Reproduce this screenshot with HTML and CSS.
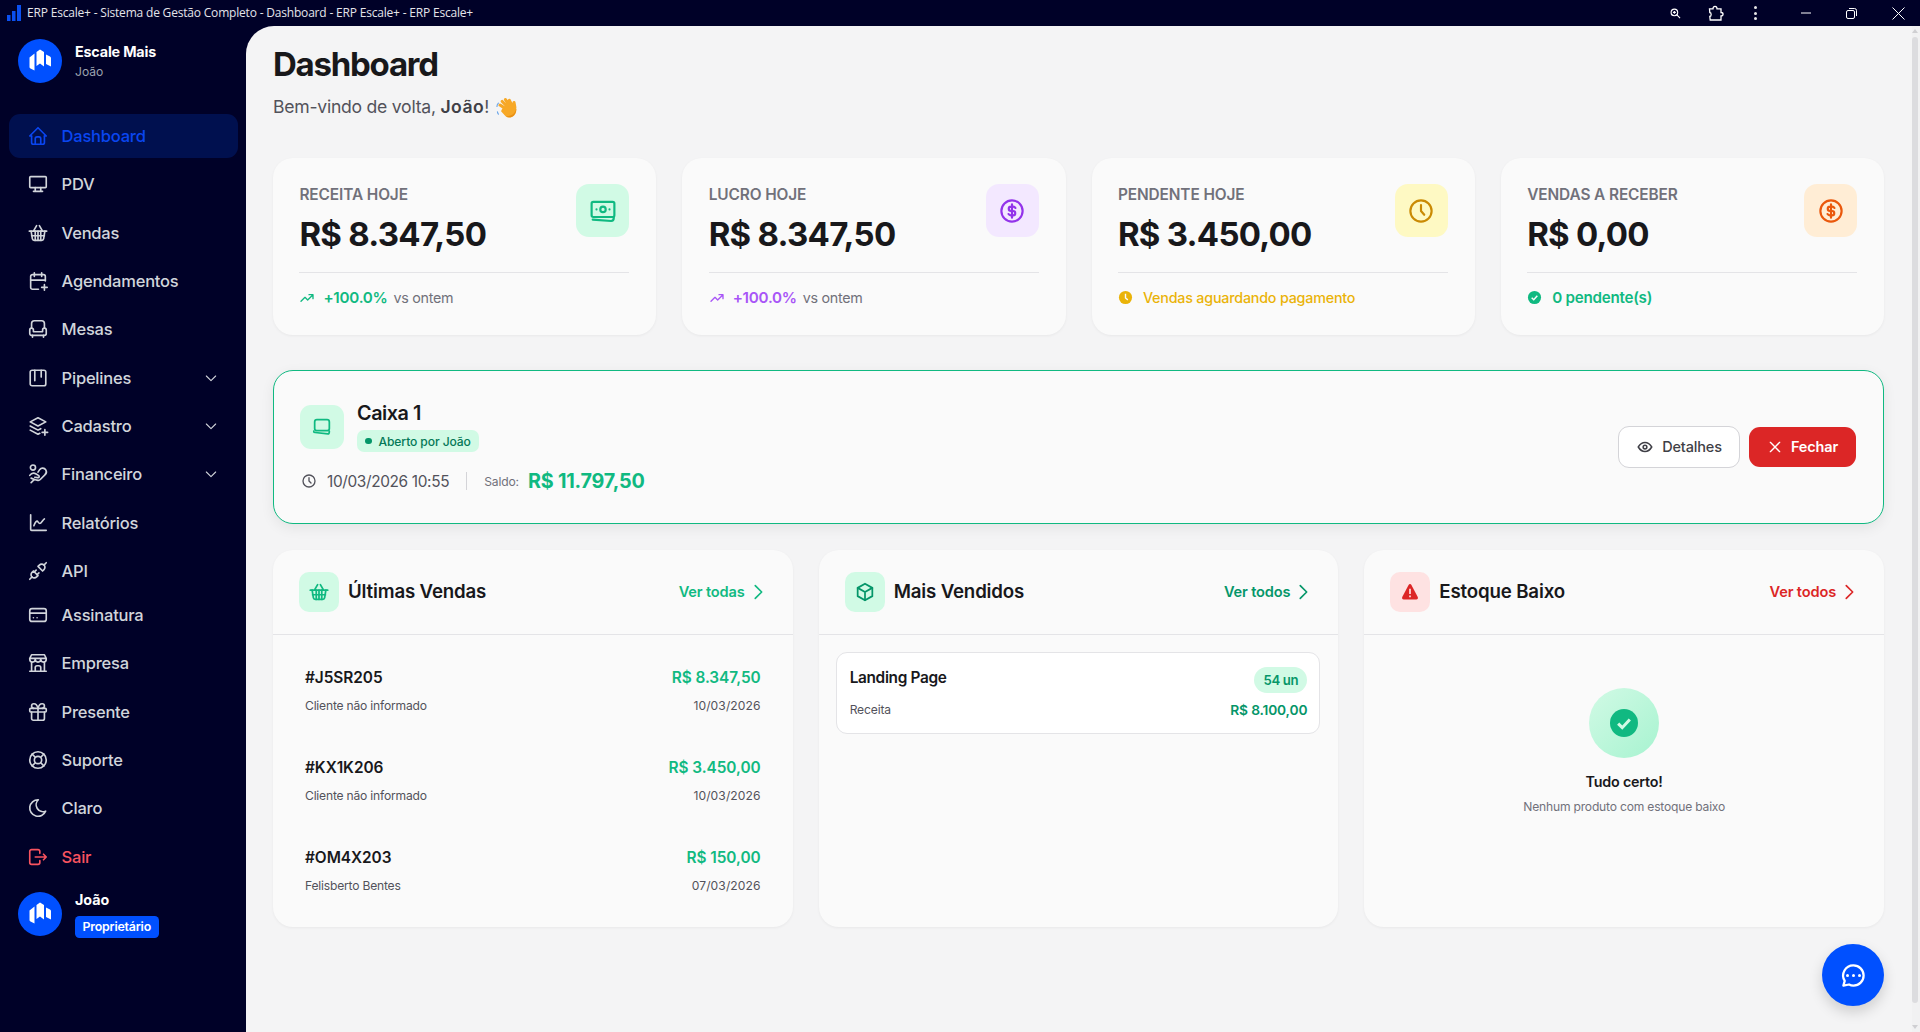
FILE: index.html
```html
<!DOCTYPE html>
<html lang="pt-BR">
<head>
<meta charset="utf-8">
<title>ERP Escale+</title>
<link rel="stylesheet" href="styles.css">
</head>
<body>
<svg class="defs" width="0" height="0" aria-hidden="true">
  <symbol id="i-logo" viewBox="0 0 44 44"><path fill="#fff" stroke="none" d="M11.5 18.5 16.5 14.5V31.5L12.5 29.5Q11.5 29 11.5 28ZM18.5 13 22 10.5 26 13V27.5L22 24.5 18.5 27ZM28 15.5 32 17.5Q33 18 33 19V27.5L28 25Z"/></symbol>
  <symbol id="i-home" viewBox="0 0 24 24"><path d="M5 12H3l9-9 9 9h-2"/><path d="M5 12v7a2 2 0 0 0 2 2h10a2 2 0 0 0 2-2v-7"/><path d="M9 21v-6a2 2 0 0 1 2-2h2a2 2 0 0 1 2 2v6"/></symbol>
  <symbol id="i-desktop" viewBox="0 0 24 24"><path d="M3 5a1 1 0 0 1 1-1h16a1 1 0 0 1 1 1v10a1 1 0 0 1-1 1H4a1 1 0 0 1-1-1z"/><path d="M7 20h10M9 16v4M15 16v4"/></symbol>
  <symbol id="i-basket" viewBox="0 0 24 24"><path d="M7 10l3.5-6M17 10l-3.5-6M2.5 10h19"/><path d="M4.5 10l1.4 8.4A2 2 0 0 0 7.9 20h8.2a2 2 0 0 0 2-1.6L19.500 10"/><path d="M5 15h14M9 10v10M12 10v10M15 10v10"/></symbol>
  <symbol id="i-calendar" viewBox="0 0 24 24"><path d="M12.500 21H6a2 2 0 0 1-2-2V7a2 2 0 0 1 2-2h12a2 2 0 0 1 2 2v5"/><path d="M16 3v4M8 3v4M4 11h16M16 19h6M19 16v6"/></symbol>
  <symbol id="i-sofa" viewBox="0 0 24 24"><path d="M5 11a2 2 0 0 1 2 2v2h10v-2a2 2 0 1 1 4 0v4a2 2 0 0 1-2 2H5a2 2 0 0 1-2-2v-4a2 2 0 0 1 2-2z"/><path d="M5 11V6a3 3 0 0 1 3-3h8a3 3 0 0 1 3 3v5M6 19v2M18 19v2"/></symbol>
  <symbol id="i-trello" viewBox="0 0 24 24"><rect x="3.500" y="3.500" width="17" height="17" rx="2"/><path d="M8.500 3.500V15M15.500 3.500V11"/></symbol>
  <symbol id="i-stack" viewBox="0 0 24 24"><path d="M12 3 3.500 7.500 12 12l8.500-4.500z"/><path d="M3.500 12 12 16.500l3-1.600M3.500 16.500 12 21l2-1M16.500 19h6M19.500 16v6"/></symbol>
  <symbol id="i-hand" viewBox="0 0 24 24"><circle cx="6.500" cy="5" r="2.800"/><path d="M3 13.500c2-2.800 4.500-3 7-1.500l2.500 1.500c1.500.8.8 2.800-1 2.500l-3-.5"/><path d="M12 10l2-3c1.500-2 5-1.800 6.500.5 1.200 2 .7 4-1 5.500l-5 5a3 3 0 0 1-2.500.9L8 18l-3.500 3.500"/><path d="M4.500 16.500 8 18"/></symbol>
  <symbol id="i-chart" viewBox="0 0 24 24"><path d="M4 3v16a1 1 0 0 0 1 1h16"/><path d="M7.500 15c1.200-3 2.500-5 3.500-5s1.500 2.500 3 2.500 3-3.500 5-5"/></symbol>
  <symbol id="i-plug" viewBox="0 0 24 24"><path d="M7 12l5 5-1.500 1.500a3.536 3.536 0 1 1-5-5z"/><path d="M17 12l-5-5 1.500-1.500a3.536 3.536 0 1 1 5 5z"/><path d="M3 21l2.500-2.500M18.500 5.500 21 3M10 11l-2 2M13 14l-2 2"/></symbol>
  <symbol id="i-card" viewBox="0 0 24 24"><rect x="3" y="5" width="18" height="14" rx="2.500"/><path d="M3 10h18M7 15h.01M11 15h.01"/></symbol>
  <symbol id="i-store" viewBox="0 0 24 24"><path d="M3 21h18M3 7v1a3 3 0 0 0 6 0V7m0 1a3 3 0 0 0 6 0V7m0 1a3 3 0 0 0 6 0V7H3l2-4h14l2 4"/><path d="M5 21V10.850M19 21V10.850M9 21v-4a2 2 0 0 1 2-2h2a2 2 0 0 1 2 2v4"/></symbol>
  <symbol id="i-gift" viewBox="0 0 24 24"><rect x="3" y="8" width="18" height="4" rx="1"/><path d="M12 8v13M19 12v7a2 2 0 0 1-2 2H7a2 2 0 0 1-2-2v-7"/><path d="M7.500 8a2.500 2.500 0 0 1 0-5A4.800 8 0 0 1 12 8a4.800 8 0 0 1 4.500-5 2.500 2.500 0 0 1 0 5"/></symbol>
  <symbol id="i-buoy" viewBox="0 0 24 24"><circle cx="12" cy="12" r="4"/><circle cx="12" cy="12" r="9"/><path d="M15 15l3.350 3.350M9 15l-3.350 3.350M5.650 5.650 9 9M18.350 5.650 15 9"/></symbol>
  <symbol id="i-moon" viewBox="0 0 24 24"><path d="M12 3h.393a7.500 7.500 0 0 0 7.920 12.446A9 9 0 1 1 12 3z"/></symbol>
  <symbol id="i-logout" viewBox="0 0 24 24"><path d="M14 8V6a2 2 0 0 0-2-2H5a2 2 0 0 0-2 2v12a2 2 0 0 0 2 2h7a2 2 0 0 0 2-2v-2"/><path d="M9 12h12l-3-3M18 15l3-3"/></symbol>
  <symbol id="i-down" viewBox="0 0 24 24"><path d="M5 9l7 7 7-7"/></symbol>
  <symbol id="i-right" viewBox="0 0 24 24"><path d="M9 5l7 7-7 7"/></symbol>
  <symbol id="i-cash" viewBox="0 0 24 24"><rect x="1.500" y="3.500" width="21" height="14" rx="1.500"/><circle cx="12" cy="10.500" r="2.500"/><path d="M6 10.500h.01M18 10.500h.01M2.500 20l17 1.200c1.500 0 2.500-1 2.500-3.200"/></symbol>
  <symbol id="i-dollar" viewBox="0 0 24 24"><circle cx="12" cy="12" r="9.800"/><path d="M15.200 9.200A2.500 2.500 0 0 0 13 8h-2a2 2 0 0 0 0 4h2a2 2 0 0 1 0 4h-2a2.500 2.500 0 0 1-2.200-1.200M12 5.800v12.400"/></symbol>
  <symbol id="i-clock" viewBox="0 0 24 24"><circle cx="12" cy="12" r="9.800"/><path d="M12 6.500V12l3 3.500"/></symbol>
  <symbol id="i-clock-sm" viewBox="0 0 24 24"><circle cx="12" cy="12" r="9"/><path d="M12 7v5l3 3"/></symbol>
  <symbol id="i-trend" viewBox="0 0 24 24"><path d="M3 17l6-6 4 4 8-8M15 7h6v6"/></symbol>
  <symbol id="i-register" viewBox="0 0 24 24"><rect x="4" y="4" width="16" height="12" rx="2.500"/><path d="M3 16.500c0 1 .5 1.500 1.500 1.500l14 1.500c1 0 1.500-.5 1.500-3"/></symbol>
  <symbol id="i-eye" viewBox="0 0 24 24"><circle cx="12" cy="12" r="2.500"/><path d="M21 12c-2.400 4-5.400 6-9 6s-6.600-2-9-6c2.400-4 5.400-6 9-6s6.600 2 9 6z"/></symbol>
  <symbol id="i-x" viewBox="0 0 24 24"><path d="M5 5l14 14M19 5 5 19"/></symbol>
  <symbol id="i-box" viewBox="0 0 24 24"><path d="M12 3l8 4.500v9L12 21l-8-4.500v-9z"/><path d="M12 12l8-4.500M12 12v9M12 12 4 7.500"/></symbol>
  <symbol id="i-chat" viewBox="0 0 24 24"><path d="M12 3a9 9 0 0 1 0 18 9 9 0 0 1-4-1l-5 1 1.200-4.200A9 9 0 0 1 12 3z"/></symbol>
</svg>

<div class="app">
  <header class="titlebar">
    <svg class="tb-logo" viewBox="0 0 14 16"><path fill="#0b50f0" d="M0 10h3.500v6H0zM5 6h3.500v10H5zM10 0h4v16h-4z"/></svg>
    <span class="tb-title">ERP Escale+ - Sistema de Gestão Completo - Dashboard - ERP Escale+ - ERP Escale+</span>
    <div class="tb-actions">
      <svg class="tb-zoom" viewBox="0 0 12 12"><circle cx="4.800" cy="4.800" r="3.600"/><path d="M7.500 7.500 11 11M3.200 4.800h3.200M4.800 3.200v3.200"/></svg>
      <svg class="tb-ext" viewBox="0 0 16 16"><path d="M1.500 3.800H5c0-3.300 4-3.300 4 0h4v3.700c2.700 0 2.700 3.300 0 3.300V15H2.200l-.4-3.500c1.800 0 1.800-4 0-4z"/></svg>
      <span class="tb-kebab"><i></i><i></i><i></i></span>
      <svg class="tb-min" viewBox="0 0 10 10"><path d="M0 5h10"/></svg>
      <svg class="tb-max" viewBox="0 0 11 11"><rect x=".5" y="2.500" width="8" height="8" rx="1.500"/><path d="M3 .5h5.500a2 2 0 0 1 2 2V8"/></svg>
      <svg class="tb-close" viewBox="0 0 13 13"><path d="M.5.5l12 12M12.500.5l-12 12"/></svg>
    </div>
  </header>

  <div class="shell">
    <aside class="sidebar">
      <div class="brand">
        <svg class="avatar"><use href="#i-logo"/></svg>
        <div class="brand-text"><strong>Escale Mais</strong><span>João</span></div>
      </div>
      <nav class="nav">
        <a class="nav-item active"><svg class="ic"><use href="#i-home"/></svg><span>Dashboard</span></a>
        <a class="nav-item"><svg class="ic"><use href="#i-desktop"/></svg><span>PDV</span></a>
        <a class="nav-item"><svg class="ic"><use href="#i-basket"/></svg><span>Vendas</span></a>
        <a class="nav-item"><svg class="ic"><use href="#i-calendar"/></svg><span>Agendamentos</span></a>
        <a class="nav-item"><svg class="ic"><use href="#i-sofa"/></svg><span>Mesas</span></a>
        <a class="nav-item"><svg class="ic"><use href="#i-trello"/></svg><span>Pipelines</span><svg class="caret"><use href="#i-down"/></svg></a>
        <a class="nav-item"><svg class="ic"><use href="#i-stack"/></svg><span>Cadastro</span><svg class="caret"><use href="#i-down"/></svg></a>
        <a class="nav-item"><svg class="ic"><use href="#i-hand"/></svg><span>Financeiro</span><svg class="caret"><use href="#i-down"/></svg></a>
        <a class="nav-item"><svg class="ic"><use href="#i-chart"/></svg><span>Relatórios</span></a>
        <a class="nav-item tight"><svg class="ic"><use href="#i-plug"/></svg><span>API</span></a>
        <a class="nav-item"><svg class="ic"><use href="#i-card"/></svg><span>Assinatura</span></a>
        <a class="nav-item"><svg class="ic"><use href="#i-store"/></svg><span>Empresa</span></a>
        <a class="nav-item"><svg class="ic"><use href="#i-gift"/></svg><span>Presente</span></a>
        <a class="nav-item"><svg class="ic"><use href="#i-buoy"/></svg><span>Suporte</span></a>
        <a class="nav-item"><svg class="ic"><use href="#i-moon"/></svg><span>Claro</span></a>
        <a class="nav-item danger"><svg class="ic"><use href="#i-logout"/></svg><span>Sair</span></a>
      </nav>
      <div class="user">
        <svg class="avatar"><use href="#i-logo"/></svg>
        <div class="user-text"><strong>João</strong><span class="role">Proprietário</span></div>
      </div>
    </aside>

    <main class="main">
      <div class="content">
        <h1 class="page-title">Dashboard</h1>
        <p class="page-sub">Bem-vindo de volta, <b>João</b><span class="bang">! </span><svg class="wave" viewBox="0 0 24 24"><g transform="rotate(-16 12 14)"><g fill="none" stroke="#f7a826" stroke-width="3.200" stroke-linecap="round"><path d="M10.500 13 5.800 7.500M12.500 11 9 4.500M15 10.500 12.800 3.500M17.500 11 16.500 5.500M20 14l.5-5"/></g><path fill="#f7a826" d="M7 11.500h13.500l.5 3c0 5-3.500 8.500-7.500 8.500-3 0-5-1.500-6-4L5 14z"/><path fill="#e98f14" d="M8.500 20.500c1.500 2 4 2.500 6.500 2 3-.7 5.500-3.500 6-7-1.500 3-4 5-7 5.500-2 .3-4 0-5.500-.5z"/></g><path fill="none" stroke="#6aa5e8" stroke-width="1.200" stroke-linecap="round" d="M1 11c0-1.500.5-2.500 1.500-3.500M2.500 19c-.6-.8-.9-1.500-1-2.500"/></svg></p>

        <section class="stats">
          <article class="stat">
            <div class="stat-top">
              <div><div class="stat-label">RECEITA HOJE</div><div class="stat-value">R$ 8.347,50</div></div>
              <span class="tile green"><svg class="ic-26"><use href="#i-cash"/></svg></span>
            </div>
            <div class="stat-foot text-green"><svg class="ic-16"><use href="#i-trend"/></svg><b>+100.0%</b><span class="muted">vs ontem</span></div>
          </article>
          <article class="stat">
            <div class="stat-top">
              <div><div class="stat-label">LUCRO HOJE</div><div class="stat-value">R$ 8.347,50</div></div>
              <span class="tile purple"><svg class="ic-26"><use href="#i-dollar"/></svg></span>
            </div>
            <div class="stat-foot text-purple"><svg class="ic-16"><use href="#i-trend"/></svg><b>+100.0%</b><span class="muted">vs ontem</span></div>
          </article>
          <article class="stat">
            <div class="stat-top">
              <div><div class="stat-label">PENDENTE HOJE</div><div class="stat-value">R$ 3.450,00</div></div>
              <span class="tile yellow"><svg class="ic-26"><use href="#i-clock"/></svg></span>
            </div>
            <div class="stat-foot wide text-yellow"><svg class="solid" viewBox="0 0 16 16"><circle cx="8" cy="8" r="7" fill="#eab308"/><path d="M8 4v4.500l2.500 2" fill="none" stroke="#fafafa" stroke-width="1.500"/></svg><span class="pending">Vendas aguardando pagamento</span></div>
          </article>
          <article class="stat">
            <div class="stat-top">
              <div><div class="stat-label">VENDAS A RECEBER</div><div class="stat-value">R$ 0,00</div></div>
              <span class="tile orange"><svg class="ic-26"><use href="#i-dollar"/></svg></span>
            </div>
            <div class="stat-foot wide text-green"><svg class="solid" viewBox="0 0 16 16"><circle cx="8" cy="8" r="7" fill="#10b981"/><path d="M5 8.200l2.200 2.200L11 6.200" fill="none" stroke="#fafafa" stroke-width="1.600"/></svg><b>0 pendente(s)</b></div>
          </article>
        </section>

        <section class="register">
          <div class="register-info">
            <div class="register-head">
              <span class="tile-44"><svg class="ic-22"><use href="#i-register"/></svg></span>
              <div>
                <div class="register-name">Caixa 1</div>
                <span class="open-badge"><i class="dot"></i>Aberto por João</span>
              </div>
            </div>
            <div class="register-meta">
              <svg class="ic-16 gray"><use href="#i-clock-sm"/></svg>
              <span class="date">10/03/2026 10:55</span>
              <i class="vr"></i>
              <span class="saldo">Saldo:</span>
              <b class="balance">R$ 11.797,50</b>
            </div>
          </div>
          <div class="register-actions">
            <button class="btn ghost"><svg class="ic-18"><use href="#i-eye"/></svg>Detalhes</button>
            <button class="btn red"><svg class="ic-16"><use href="#i-x"/></svg>Fechar</button>
          </div>
        </section>

        <section class="panels">
          <article class="panel">
            <header class="panel-head">
              <span class="tile-40 green"><svg class="ic-22"><use href="#i-basket"/></svg></span>
              <h2>Últimas Vendas</h2>
              <a class="see-all text-green">Ver todas<svg class="chev"><use href="#i-right"/></svg></a>
            </header>
            <div class="sales">
              <div class="sale"><div class="sale-line"><b>#J5SR205</b><b class="amount">R$ 8.347,50</b></div><div class="sale-line sub"><span>Cliente não informado</span><span class="sale-date">10/03/2026</span></div></div>
              <div class="sale"><div class="sale-line"><b>#KX1K206</b><b class="amount">R$ 3.450,00</b></div><div class="sale-line sub"><span>Cliente não informado</span><span class="sale-date">10/03/2026</span></div></div>
              <div class="sale"><div class="sale-line"><b>#OM4X203</b><b class="amount">R$ 150,00</b></div><div class="sale-line sub"><span>Felisberto Bentes</span><span class="sale-date">07/03/2026</span></div></div>
            </div>
          </article>

          <article class="panel">
            <header class="panel-head">
              <span class="tile-40 emerald"><svg class="ic-22"><use href="#i-box"/></svg></span>
              <h2>Mais Vendidos</h2>
              <a class="see-all text-emerald">Ver todos<svg class="chev"><use href="#i-right"/></svg></a>
            </header>
            <div class="best">
              <div class="product">
                <div class="product-line top"><b>Landing Page</b><span class="qty">54 un</span></div>
                <div class="product-line sub"><span>Receita</span><b class="revenue">R$ 8.100,00</b></div>
              </div>
            </div>
          </article>

          <article class="panel">
            <header class="panel-head">
              <span class="tile-40 rose"><svg class="solid-22" viewBox="0 0 24 24"><path fill="#dc2626" d="M10.300 3.500c.8-1.300 2.600-1.300 3.400 0l7.600 14.500c.7 1.400-.2 3-1.700 3H4.400c-1.500 0-2.400-1.600-1.700-3z"/><path fill="#fee2e2" d="M11 8h2v6.500h-2zM11 16.300h2v2h-2z"/></svg></span>
              <h2>Estoque Baixo</h2>
              <a class="see-all text-red">Ver todos<svg class="chev"><use href="#i-right"/></svg></a>
            </header>
            <div class="empty">
              <span class="ok-ring"><svg class="ok-icon" viewBox="0 0 24 24"><circle cx="12" cy="12" r="12" fill="#10b981"/><path d="M7 12.500l3.500 3.500L17 9" fill="none" stroke="#d1fae5" stroke-width="2.600"/></svg></span>
              <div class="empty-title">Tudo certo!</div>
              <div class="empty-sub">Nenhum produto com estoque baixo</div>
            </div>
          </article>
        </section>
      </div>

      <div class="scrollbar"><i class="arrow up"></i><i class="thumb"></i><i class="arrow dn"></i></div>

      <button class="fab" aria-label="Chat"><svg class="fab-icon"><use href="#i-chat"/></svg><span class="fab-dots"><i></i><i></i><i></i></span></button>
    </main>
  </div>
</div>
</body>
</html>
```

FILE: styles.css
```css
* { box-sizing: border-box; }
html, body { margin: 0; height: 100%; overflow: hidden; }
body { font-family: "Inter", "Liberation Sans", sans-serif; background: #000128; color: #18181b; }
.defs { position: absolute; }
svg { display: block; flex: none; }
b { font-weight: 600; }

.app { display: flex; flex-direction: column; height: 100vh; background: #000128; }

/* title bar */
.titlebar { display: flex; align-items: center; height: 26px; flex: none; padding-left: 7px; color: #e5e7eb; }
.tb-logo { width: 14px; height: 16px; margin-right: 6px; }
.tb-title { font: 400 12px/26px "Open Sans", "Noto Sans", sans-serif; letter-spacing: -.19px; color: #e4e4ea; }
.tb-actions { margin-left: auto; display: flex; align-items: center; height: 26px; }
.tb-actions svg { fill: none; stroke: #fff; }
.tb-zoom { width: 11px; height: 11px; stroke-width: 1.200; margin-right: 27px; }
.tb-ext { width: 16px; height: 16px; stroke-width: 1.300; margin-right: 30px; }
.tb-kebab { display: flex; flex-direction: column; gap: 2.500px; width: 3px; margin-right: 44px; }
.tb-kebab i { width: 3px; height: 3px; border-radius: 50%; background: #e5e5e5; }
.tb-min { width: 10px; height: 10px; stroke-width: 1; margin-right: 35px; }
.tb-max { width: 11px; height: 11px; stroke-width: 1; margin-right: 35px; }
.tb-close { width: 13px; height: 13px; stroke-width: 1; margin-right: 15px; }

.shell { display: flex; flex: 1; min-height: 0; }

/* sidebar */
.sidebar { width: 246px; flex: none; padding-top: 13px; display: flex; flex-direction: column; }
.brand, .user { display: flex; align-items: center; gap: 13px; padding-left: 18px; }
.avatar { width: 44px; height: 44px; border-radius: 50%; background: #0050ff; }
.brand-text { display: flex; flex-direction: column; gap: 1px; padding-top: 1px; }
.brand-text strong { font-size: 14.300px; line-height: 20px; font-weight: 700; color: #fff; letter-spacing: -.16px; }
.brand-text span { font-size: 12.100px; line-height: 18px; color: #9ca3af; }
.nav { margin: 31px 8px 0 9px; display: flex; flex-direction: column; }
.nav-item { display: flex; align-items: center; height: 44px; margin-bottom: 4.350px; padding: 0 18px; border-radius: 11px; gap: 12.600px; font-size: 16.500px; font-weight: 500; color: #d1d5db; letter-spacing: -.22px; }
.nav-item.tight { margin-bottom: 0; }
.nav-item .ic { width: 22px; height: 22px; fill: none; stroke: currentColor; stroke-width: 1.800; stroke-linecap: round; stroke-linejoin: round; }
.nav-item .caret { width: 16px; height: 16px; margin-left: auto; margin-right: 1px; fill: none; stroke: currentColor; stroke-width: 1.600; stroke-linecap: round; stroke-linejoin: round; }
.nav-item.active { background: #00104f; color: #0a46f0; }
.nav-item.danger { color: #f8535f; }
.user { margin-top: 7px; }
.user-text { display: flex; flex-direction: column; align-items: flex-start; gap: 6px; }
.user-text strong { font-size: 14.300px; line-height: 20px; font-weight: 700; color: #fff; }
.role { font-size: 12.400px; line-height: 22px; padding: 0 7.500px; border-radius: 4.400px; background: #0050ff; color: #fff; font-weight: 600; letter-spacing: -.2px; }

/* main */
.main { position: relative; flex: 1; min-width: 0; display: flex; background: #f4f4f5; border-top-left-radius: 28px; }
.content { flex: 1; min-width: 0; padding: 18px 28px 0 27px; }
.page-title { margin: 0; font-size: 33px; line-height: 40px; font-weight: 700; letter-spacing: -1.250px; }
.page-sub { margin: 10px 0 0; display: flex; align-items: center; white-space: pre; font-size: 17.600px; line-height: 26px; color: #52525b; letter-spacing: -.25px; }
.page-sub b { font-weight: 600; letter-spacing: .45px; color: #3f3f46; }
.bang { letter-spacing: .2px; }
.wave { width: 23px; height: 23px; margin-left: 1px; }

/* stat cards */
.stats { margin-top: 38px; display: grid; grid-template-columns: repeat(4, 1fr); gap: 26px; }
.stat { height: 177px; padding: 26px 27px 26px 26.400px; background: #fafafa; border-radius: 20px; box-shadow: 0 1px 3px rgba(0,0,0,.05); }
.stat-top { display: flex; justify-content: space-between; border-bottom: 1px solid #e4e4e7; height: 88.500px; }
.stat-label { font-size: 15.400px; line-height: 22px; font-weight: 600; color: #71717a; letter-spacing: -.1px; }
.stat-value { margin-top: 8px; font-size: 33px; line-height: 40px; font-weight: 700; letter-spacing: -.75px; white-space: nowrap; }
.tile { width: 53px; height: 53px; border-radius: 13px; display: flex; align-items: center; justify-content: center; }
.ic-26, .ic-22, .ic-18, .ic-16, .chev { fill: none; stroke: currentColor; stroke-linecap: round; stroke-linejoin: round; }
.ic-26 { width: 26px; height: 26px; stroke-width: 2; }
.ic-22 { width: 22px; height: 22px; stroke-width: 1.900; }
.ic-18 { width: 18px; height: 18px; stroke-width: 2; }
.ic-16 { width: 16px; height: 16px; stroke-width: 2; }
.chev { width: 22px; height: 22px; stroke-width: 1.800; }
.tile.green { background: #d1fae5; color: #10b981; }
.tile.purple { background: #f3e8ff; color: #9333ea; }
.tile.yellow { background: #fef9c3; color: #ca8a04; }
.tile.orange { background: #ffedd5; color: #ea580c; }
.stat-foot { display: flex; align-items: center; gap: 8px; margin-top: 14px; font-size: 14.300px; line-height: 22px; }
.stat-foot.wide { gap: 10px; }
.stat-foot b { font-size: 15.200px; font-weight: 600; letter-spacing: -.25px; }
.pending { font-weight: 500; letter-spacing: -.2px; }
.muted { color: #71717a; letter-spacing: -.3px; margin-left: -2px; }
.solid { width: 15px; height: 15px; }
.text-green { color: #10b981; }
.text-purple { color: #a855f7; }
.text-yellow { color: #eab308; }
.text-emerald { color: #059669; }
.text-red { color: #dc2626; }

/* open register */
.register { margin-top: 35px; height: 154px; padding: 30px 27px 30px 26px; display: flex; align-items: center; justify-content: space-between; background: #fafafa; border: 1px solid #10b981; border-radius: 20px; box-shadow: 0 4px 14px rgba(0,0,0,.07); }
.register-head { display: flex; align-items: center; gap: 13px; }
.tile-44 { width: 44px; height: 44px; border-radius: 11px; background: #d1fae5; color: #10b981; display: flex; align-items: center; justify-content: center; }
.register-name { font-size: 19.800px; line-height: 24px; font-weight: 600; letter-spacing: -.45px; }
.open-badge { display: inline-flex; align-items: center; gap: 7px; height: 22px; margin-top: 5px; padding: 0 8px; border-radius: 7px; background: #d1fae5; color: #047857; font-size: 12.100px; font-weight: 500; letter-spacing: -.1px; }
.dot { width: 6.500px; height: 6.500px; border-radius: 50%; background: #059669; }
.register-meta { display: flex; align-items: center; height: 24px; margin-top: 17px; }
.gray { color: #52525b; margin-left: 1px; }
.date { margin-left: 10px; font-size: 15.400px; color: #52525b; letter-spacing: -.35px; }
.vr { width: 1px; height: 18px; background: #d4d4d8; margin: 0 17px; }
.saldo { font-size: 12.100px; color: #71717a; letter-spacing: -.15px; }
.balance { margin-left: 9px; font-size: 19.800px; font-weight: 700; color: #10b981; letter-spacing: -.2px; }
.register-actions { display: flex; align-items: center; gap: 9px; }
.btn { display: flex; align-items: center; justify-content: center; gap: 8px; border-radius: 11px; font: 500 14.500px/20px "Inter", sans-serif; letter-spacing: -.15px; }
.btn.ghost { width: 122px; height: 42px; background: #fff; border: 1px solid #d4d4d8; color: #3f3f46; }
.btn.red { width: 107px; height: 40px; border: 0; background: #dc2626; color: #fff; font-weight: 600; }

/* panels */
.panels { margin-top: 26px; display: grid; grid-template-columns: repeat(3, 1fr); gap: 26px; }
.panel { height: 377px; background: #fafafa; border-radius: 20px; box-shadow: 0 1px 3px rgba(0,0,0,.05); display: flex; flex-direction: column; }
.panel-head { flex: none; height: 85px; display: flex; align-items: center; padding: 0 26px; border-bottom: 1px solid #e4e4e7; }
.tile-40 { width: 40px; height: 40px; border-radius: 10px; display: flex; align-items: center; justify-content: center; }
.tile-40.green { background: #d1fae5; color: #10b981; }
.tile-40.emerald { background: #d1fae5; color: #059669; }
.tile-40.rose { background: #fee2e2; }
.solid-22 { width: 20px; height: 20px; }
.panel-head h2 { margin: 0 0 0 9px; font-size: 18.700px; line-height: 24px; font-weight: 600; letter-spacing: -.17px; }
.see-all { margin-left: auto; display: flex; align-items: center; gap: 2px; font-size: 14.600px; line-height: 22px; font-weight: 600; letter-spacing: -.15px; margin-right: -2px; margin-bottom: 1px; }

.sales { padding: 31px 32px 0; display: flex; flex-direction: column; gap: 40px; }
.sale-line { display: flex; justify-content: space-between; font-size: 15.400px; line-height: 24px; letter-spacing: -.05px; }
.sale-line.sub { margin-top: 6px; font-size: 12.100px; line-height: 20px; color: #52525b; letter-spacing: -.2px; }
.sale-line .sale-date { font-size: 12.100px; letter-spacing: .1px; }
.amount { color: #10b981; }
.best { padding: 17px 18px 17px 17px; }
.product { height: 82px; padding: 14px 12px 0 13px; background: #fff; border: 1px solid #e4e4e7; border-radius: 11px; }
.product-line { display: flex; justify-content: space-between; font-size: 15.400px; line-height: 22px; letter-spacing: -.33px; }
.product-line.top { height: 26px; align-items: flex-start; }
.product-line.sub { align-items: center; margin-top: 7px; font-size: 12.100px; line-height: 20px; color: #52525b; letter-spacing: -.15px; }
.qty { height: 26px; line-height: 26px; padding: 0 9px; border-radius: 13px; background: #d1fae5; color: #059669; font-size: 13.200px; font-weight: 600; }
.revenue { color: #059669; font-size: 13.750px; }
.empty { padding-top: 53px; display: flex; flex-direction: column; align-items: center; }
.ok-ring { width: 70px; height: 70px; border-radius: 50%; background: linear-gradient(135deg, #d1fae5, #a7f3d0); display: flex; align-items: center; justify-content: center; }
.ok-icon { width: 28px; height: 28px; }
.empty-title { margin-top: 14px; font-size: 14.300px; line-height: 20px; font-weight: 600; letter-spacing: -.2px; }
.empty-sub { margin-top: 6px; font-size: 12.100px; line-height: 18px; color: #71717a; letter-spacing: -.2px; }

/* scrollbar and chat button */
.scrollbar { width: 8px; flex: none; padding-right: 2px; display: flex; flex-direction: column; align-items: center; background: #f1f1f2; }
.arrow { width: 0; height: 0; border-left: 3px solid transparent; border-right: 3px solid transparent; }
.arrow.up { margin-top: 3px; border-bottom: 4px solid #cfcfd2; }
.arrow.dn { margin-top: 22px; border-top: 4px solid #cfcfd2; }
.thumb { width: 6px; height: 966px; margin-top: 4px; border-radius: 3px; background: #dcdcdf; }
.fab { position: absolute; right: 36px; bottom: 26px; width: 62px; height: 62px; padding: 0; border: 0; border-radius: 50%; background: #0050ff; box-shadow: 0 6px 14px rgba(0,0,0,.16); display: flex; align-items: center; justify-content: center; }
.fab-icon { width: 27px; height: 27px; fill: none; stroke: #fff; stroke-width: 2; stroke-linejoin: round; }
.fab-dots { position: absolute; inset: 0; display: flex; align-items: center; justify-content: center; gap: 3px; }
.fab-dots i { width: 3px; height: 3px; border-radius: 50%; background: #fff; }
```
